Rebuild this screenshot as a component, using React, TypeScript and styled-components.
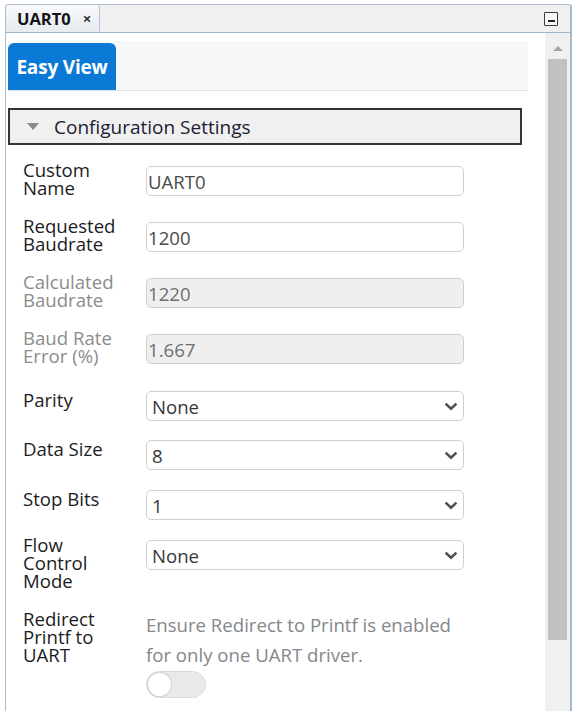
import styled, { createGlobalStyle } from "styled-components"

const GlobalStyle = createGlobalStyle`
    html, body{
        margin: 0;
        padding: 0;
        background: #fff;
        font-family: "Open Sans", "Noto Sans", sans-serif;
    }
`

const Window = styled.div`
    box-sizing: border-box;
    margin: 4px 0 0 5px;
    width: 567px;
    height: 707px;
    border: 1px solid #aebdce;
    border-right: 2px solid #a3b8d2;
    border-bottom: none;
    border-radius: 3px 3px 0 0;
    display: flex;
    flex-direction: column;
    overflow: hidden;
`

const TabStrip = styled.div`
    height: 27px;
    flex-shrink: 0;
    background: #f0f0f0;
    border-bottom: 1px solid #9fb3ca;
    display: flex;
    align-items: stretch;
    justify-content: space-between;
`

const DocTab = styled.div`
    display: flex;
    align-items: center;
    gap: 12px;
    padding: 0 8px 0 11px;
    background: linear-gradient(#f8f9fb, #e6ebf1);
    border-right: 1px solid #b3c1d1;
    border-radius: 0 3px 0 0;
    font-weight: 700;
    font-size: 16.5px;
    color: #141414;
`

const Close = styled.span`
    font-size: 15px;
    font-weight: 700;
    color: #333;
    line-height: 1;
`

const MinButton = styled.div`
    box-sizing: border-box;
    width: 14px;
    height: 14px;
    margin: 7px 12px 0 0;
    border: 1.5px solid #3c3c3c;
    border-radius: 1px;
    background: #f8f8f8;
    display: flex;
    align-items: flex-end;
    justify-content: center;
    padding-bottom: 3px;

    &::after{
        content: "";
        width: 7px;
        height: 2px;
        background: #222;
    }
`

const Body = styled.div`
    flex: 1;
    display: flex;
    min-height: 0;
`

const Content = styled.div`
    flex: 1;
    padding: 8px 17px 0 2px;
    background: #fff;
`

const ViewTabs = styled.div`
    height: 49px;
    background: #f7f8fa;
    border-bottom: 1px solid #dfe3e8;
    display: flex;
    align-items: flex-end;
`

const ViewTab = styled.div<{ $active?: boolean }>`
    width: 108px;
    height: 47px;
    display: flex;
    align-items: center;
    justify-content: center;
    border-radius: 6px 6px 0 0;
    background: ${p => p.$active ? "#0a79d6" : "transparent"};
    color: ${p => p.$active ? "#fff" : "#333"};
    font-weight: 700;
    font-size: 19px;
    letter-spacing: -0.2px;
`

const SectionHeader = styled.div`
    box-sizing: border-box;
    margin: 17px 6px 0 0;
    height: 37px;
    border: 2px solid #353535;
    background: #f0f0f0;
    display: flex;
    align-items: center;
    gap: 15px;
    padding-left: 17px;
    font-size: 19px;
    color: #202030;
`

const Caret = styled.span`
    width: 0;
    height: 0;
    border-left: 6px solid transparent;
    border-right: 6px solid transparent;
    border-top: 7px solid #8a8a8a;
`

const Rows = styled.div`
    padding-left: 15px;
`

const Row = styled.div<{ $space?: number }>`
    display: grid;
    grid-template-columns: 123px 318px;
    align-items: start;
    margin-top: ${p => p.$space ?? 20}px;
`

const Label = styled.div<{ $disabled?: boolean }>`
    font-size: 18.6px;
    line-height: 18px;
    color: ${p => p.$disabled ? "#8c8c8c" : "#1c1c24"};
`

const Field = styled.div<{ $shift?: number }>`
    margin-top: ${p => p.$shift ?? 0}px;
    position: relative;
`

const TextInput = styled.input`
    box-sizing: border-box;
    width: 100%;
    height: 30px;
    padding: 0 1px;
    border: 1px solid #cfcfcf;
    border-radius: 5px;
    background: ${p => p.disabled ? "#efefef" : "#fff"};
    color: ${p => p.disabled ? "#707070" : "#4a4a4a"};
    font-family: inherit;
    font-size: 18.6px;
    outline: none;
`

const Select = styled.select`
    box-sizing: border-box;
    width: 100%;
    height: 30px;
    padding: 0 30px 0 5px;
    border: 1px solid #cfcfcf;
    border-radius: 5px;
    background: #fff;
    color: #383838;
    font-family: inherit;
    font-size: 18.6px;
    appearance: none;
    outline: none;
`

const Chevron = styled.svg`
    position: absolute;
    right: 6px;
    top: 11px;
    pointer-events: none;
`

const Note = styled.div`
    font-size: 18.6px;
    line-height: 30px;
    color: #84878c;
`

const Toggle = styled.div`
    box-sizing: border-box;
    margin-top: 1px;
    width: 60px;
    height: 27px;
    border-radius: 14px;
    background: #e9e9ea;
    border: 1px solid #dadada;
    display: flex;
    align-items: center;
    padding-left: 1px;

    &::before{
        content: "";
        width: 23px;
        height: 23px;
        border-radius: 50%;
        background: #fff;
        box-shadow: 0 0 2px rgba(0,0,0,0.3);
    }
`

const Scrollbar = styled.div`
    width: 25px;
    flex-shrink: 0;
    background: #f0f0f0;
    display: flex;
    flex-direction: column;
    align-items: center;
`

const ScrollArrow = styled.span`
    margin-top: 13px;
    width: 0;
    height: 0;
    border-left: 5px solid transparent;
    border-right: 5px solid transparent;
    border-bottom: 5px solid #a6a6a6;
`

const Thumb = styled.div`
    margin-top: 8px;
    width: 19px;
    height: 581px;
    background: #c1c1c1;
`

const ChevronIcon = () => (
    <Chevron width="14" height="9" viewBox="0 0 14 9">
        <path d="M1.6 1.6 L7 6.8 L12.4 1.6" fill="none" stroke="#505050" strokeWidth="2.6" />
    </Chevron>
)

const SelectField = ({ value, shift }: { value: string, shift?: number }) => (
    <Field $shift={shift}>
        <Select defaultValue={value}>
            <option>{value}</option>
        </Select>
        <ChevronIcon />
    </Field>
)

const App = () => {
    return (
        <>
            <GlobalStyle />
            <Window>
                <TabStrip>
                    <DocTab>UART0 <Close>×</Close></DocTab>
                    <MinButton />
                </TabStrip>
                <Body>
                    <Content>
                        <ViewTabs>
                            <ViewTab $active>Easy View</ViewTab>
                        </ViewTabs>
                        <SectionHeader><Caret />Configuration Settings</SectionHeader>
                        <Rows>
                            <Row $space={16}>
                                <Label>Custom<br />Name</Label>
                                <Field $shift={5}><TextInput defaultValue="UART0" /></Field>
                            </Row>
                            <Row>
                                <Label>Requested<br />Baudrate</Label>
                                <Field $shift={5}><TextInput defaultValue="1200" /></Field>
                            </Row>
                            <Row>
                                <Label $disabled>Calculated<br />Baudrate</Label>
                                <Field $shift={5}><TextInput disabled defaultValue="1220" /></Field>
                            </Row>
                            <Row>
                                <Label $disabled>Baud Rate<br />Error (%)</Label>
                                <Field $shift={5}><TextInput disabled defaultValue="1.667" /></Field>
                            </Row>
                            <Row $space={26}>
                                <Label>Parity</Label>
                                <SelectField value="None" />
                            </Row>
                            <Row $space={19}>
                                <Label>Data Size</Label>
                                <SelectField value="8" />
                            </Row>
                            <Row>
                                <Label>Stop Bits</Label>
                                <SelectField value="1" />
                            </Row>
                            <Row $space={16}>
                                <Label>Flow<br />Control<br />Mode</Label>
                                <SelectField value="None" shift={4} />
                            </Row>
                            <Row>
                                <Label>Redirect<br />Printf to<br />UART</Label>
                                <div>
                                    <Note>Ensure Redirect to Printf is enabled<br />for only one UART driver.</Note>
                                    <Toggle />
                                </div>
                            </Row>
                        </Rows>
                    </Content>
                    <Scrollbar>
                        <ScrollArrow />
                        <Thumb />
                    </Scrollbar>
                </Body>
            </Window>
        </>
    )
}

export default App
